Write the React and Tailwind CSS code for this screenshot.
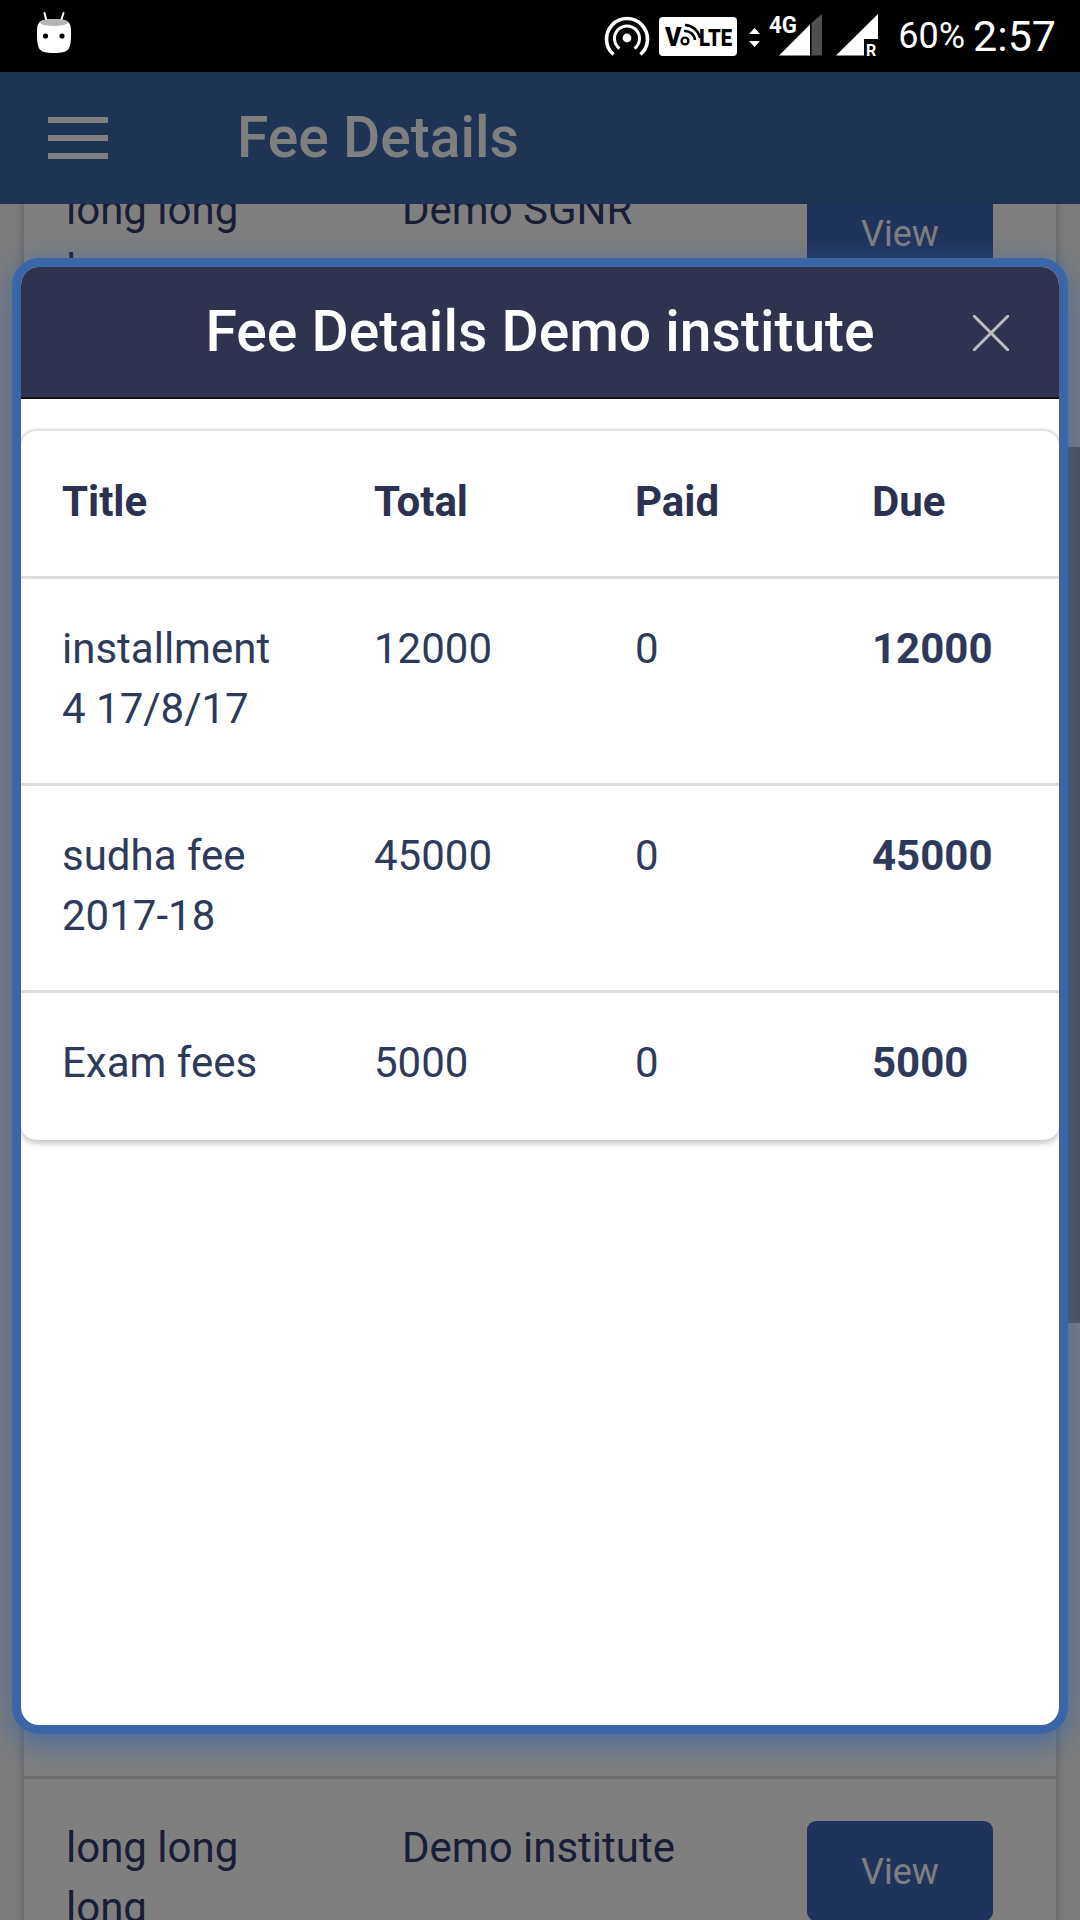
import React from "react";

const rows = [
  ["installment 4 17/8/17", "12000", "0", "12000"],
  ["sudha fee 2017-18", "45000", "0", "45000"],
  ["Exam fees", "5000", "0", "5000"],
];

function StatusIcons() {
  return (
    <svg width="1080" height="72" viewBox="0 0 1080 72" className="absolute left-0 top-0">
      {/* android head */}
      <path d="M44.5 13 L46.5 21 M63.5 13 L61 21" stroke="#fff" strokeWidth="2" strokeLinecap="round" />
      <path d="M37 33 C37 23 38 19 54 19 C70 19 71 23 71 33 C71 50 69 53 54 53 C39 53 37 50 37 33 Z" fill="#fff" />
      <ellipse cx="54" cy="22.5" rx="14" ry="3.5" fill="#b5b5b5" />
      <circle cx="45.5" cy="36" r="2.6" fill="#000" />
      <circle cx="62" cy="36" r="2.6" fill="#000" />
      {/* hotspot */}
      <circle cx="627" cy="38" r="4.4" fill="#fff" />
      <path d="M619.5 48.5 A12.5 12.5 0 1 1 634.5 48.5" fill="none" stroke="#fff" strokeWidth="3" />
      <path d="M613.5 54.5 A20.5 20.5 0 1 1 640.5 54.5" fill="none" stroke="#fff" strokeWidth="3.6" />
      {/* volte */}
      <rect x="659" y="17" width="78" height="39" rx="4" fill="#fff" />
      <text x="665" y="46" fontFamily="Roboto, sans-serif" fontWeight="900" fontSize="25" fill="#000">V</text>
      <circle cx="685" cy="41" r="3.4" fill="none" stroke="#000" strokeWidth="2.4" />
      <path d="M684 31 A10 10 0 0 1 695 40 M685 25 A16 16 0 0 1 700 38" fill="none" stroke="#000" strokeWidth="2.6" />
      <text x="699" y="46" fontFamily="Roboto, sans-serif" fontWeight="900" fontSize="24" fill="#000" textLength="33" lengthAdjust="spacingAndGlyphs">LTE</text>
      {/* arrows */}
      <path d="M754.5 28 L760 34 L749 34 Z M749 41 L760 41 L754.5 47 Z" fill="#fff" />
      <text x="769" y="33" fontFamily="Roboto, sans-serif" fontWeight="700" fontSize="24" fill="#fff" textLength="28" lengthAdjust="spacingAndGlyphs">4G</text>
      {/* signal 1 */}
      <path d="M779 55.5 L810 24.5 L810 55.5 Z" fill="#fff" />
      <path d="M811.5 23 L822 14 L822 55.5 L811.5 55.5 Z" fill="#4f4f4f" />
      {/* signal 2 */}
      <path d="M836 55.5 L864 55.5 L864 39 L878 39 L878 14 Z" fill="#fff" />
      <text x="866" y="55.5" fontFamily="Roboto, sans-serif" fontWeight="700" fontSize="16" fill="#fff">R</text>
    </svg>
  );
}

function CloseIcon() {
  return (
    <svg width="36" height="36" viewBox="0 0 36 36">
      <path d="M1 1 L35 35 M35 1 L1 35" stroke="#bdbdbd" strokeWidth="3" strokeLinecap="round" />
    </svg>
  );
}

function BackgroundRow({ name, institute }) {
  return (
    <div className="flex h-[273px] items-start border-b-[3px] border-[#dfdfdf] pl-[42px] pr-[63px] pt-[39px]">
      <div className="w-[336px] pr-[120px] text-[42px] leading-[60px] text-[#343a6c]">{name}</div>
      <div className="flex-1 text-[42px] leading-[60px] text-[#343a6c]">{institute}</div>
      <div className="mt-[3px] flex h-[100px] w-[186px] items-center justify-center rounded-[9px] bg-[#4066b8] pt-[2px] text-[36px] text-white">
        View
      </div>
    </div>
  );
}

export default function App() {
  return (
    <div className="relative h-[1920px] w-[1080px] overflow-hidden bg-[#fafafa] font-['Roboto',sans-serif]">
      {/* status bar */}
      <div className="relative z-30 flex h-[72px] items-center justify-end bg-black pr-[24px] text-white">
        <StatusIcons />
        <span className="relative mr-[8px] text-[36px] leading-none">60%</span>
        <span className="relative text-[43px] leading-none">2:57</span>
      </div>

      {/* app header */}
      <div className="relative z-10 flex h-[132px] items-center bg-[#3e66a8]">
        <div className="ml-[48px] flex w-[60px] flex-col gap-[12px]">
          <div className="h-[6px] bg-white" />
          <div className="h-[6px] bg-white" />
          <div className="h-[6px] bg-white" />
        </div>
        <div className="ml-[129px] pb-[2px] text-[57px] font-medium leading-none text-white">Fee Details</div>
      </div>

      {/* page behind */}
      <div className="mx-[24px] mt-[-63px] bg-white shadow-[0_0_9px_rgba(0,0,0,0.25)]">
        <BackgroundRow name="long long long" institute="Demo SGNR" />
        <BackgroundRow name="long long long" institute="Demo institute" />
        <BackgroundRow name="long long long" institute="Demo institute" />
        <BackgroundRow name="long long long" institute="Demo institute" />
        <BackgroundRow name="long long long" institute="Demo institute" />
        <BackgroundRow name="long long long" institute="Demo institute" />
        <BackgroundRow name="long long long" institute="Demo institute" />
      </div>

      {/* dim layer */}
      <div className="absolute inset-x-0 bottom-0 top-[72px] z-20 bg-black/50" />
      {/* scrollbar thumb */}
      <div className="absolute right-0 top-[447px] z-20 h-[876px] w-[12px] bg-black/35" />

      {/* modal */}
      <div className="absolute left-[12px] top-[258px] z-30 flex h-[1476px] w-[1056px] flex-col overflow-hidden rounded-[27px] border-[9px] border-[#3a66a7] bg-white">
        <div className="flex h-[132px] shrink-0 items-center justify-center border-b-[2px] border-[#111] bg-[#2f3350]">
          <div className="pb-[2px] text-[57px] font-medium leading-none text-white">Fee Details Demo institute</div>
        </div>
        <div className="absolute right-[50px] top-[48px]">
          <CloseIcon />
        </div>
        <div className="mt-[32px] rounded-[15px] bg-white shadow-[0_-2px_3px_rgba(0,0,0,0.12),0_3px_6px_rgba(0,0,0,0.25)]">
          <table className="w-full table-fixed border-collapse text-[42px] leading-[60px] text-[#2e3a5c]">
            <thead>
              <tr className="border-b-[3px] border-[#dcdcdc] text-left text-[#2c3152]">
                <th className="w-[353px] pb-[44px] pl-[41px] pt-[41px] font-bold">Title</th>
                <th className="w-[261px] pb-[44px] pt-[41px] font-bold">Total</th>
                <th className="w-[237px] pb-[44px] pt-[41px] font-bold">Paid</th>
                <th className="pb-[44px] pt-[41px] font-bold">Due</th>
              </tr>
            </thead>
            <tbody>
              {rows.map((r, i) => {
                const last = i === rows.length - 1;
                const pad = last ? "pb-[47px] pt-[40px]" : "pb-[44px] pt-[40px]";
                return (
                  <tr key={r[0]} className={last ? "align-top" : "border-b-[3px] border-[#dcdcdc] align-top"}>
                    <td className={`pl-[41px] pr-[80px] ${pad}`}>{r[0]}</td>
                    <td className={pad}>{r[1]}</td>
                    <td className={pad}>{r[2]}</td>
                    <td className={`font-bold ${pad}`}>{r[3]}</td>
                  </tr>
                );
              })}
            </tbody>
          </table>
        </div>
      </div>
      {/* modal glow */}
      <div className="absolute left-[12px] top-[258px] z-20 h-[1476px] w-[1056px] rounded-[27px] shadow-[0_8px_30px_rgba(58,102,167,0.8)]" />
    </div>
  );
}
